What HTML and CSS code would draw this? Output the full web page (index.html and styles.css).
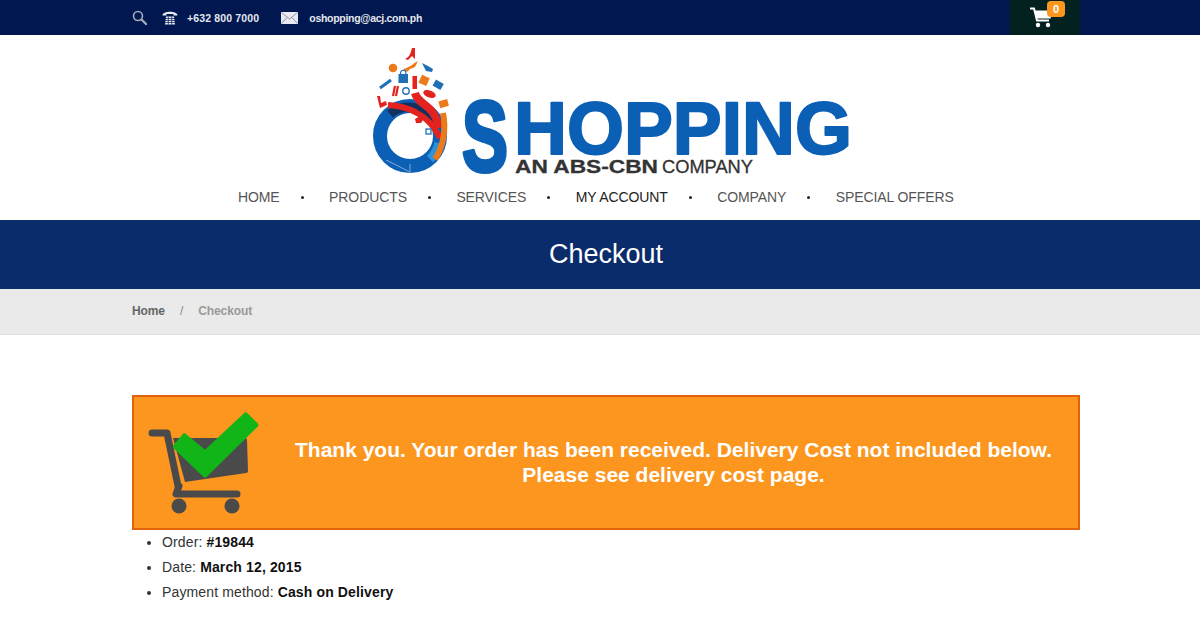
FILE: index.html
```html
<!DOCTYPE html>
<html>
<head>
    <title>Checkout - O Shopping</title>
    <link rel="stylesheet" href="styles.css">
</head>
<body>
    <div class="topbar">
        <div class="container topbar-inner">
            <svg class="icon-search" width="16" height="16" viewBox="0 0 16 16">
                <circle cx="6" cy="6" r="4.5" fill="none" stroke="#a3acb9" stroke-width="1.6"/>
                <path d="M9.5 9.5L14 14" stroke="#a3acb9" stroke-width="2.4" stroke-linecap="round"/>
            </svg>
            <svg class="icon-phone" width="16" height="16" viewBox="0 0 16 16">
                <path d="M0.500 5.500C0.500 0.500 15.500 0.500 15.500 5.500L11.500 5.500L11.500 4L4.500 4L4.500 5.500Z" fill="#e8eaf0"/>
                <path d="M4 6.500L12 6.500L13 14.500L3 14.500Z" fill="#e8eaf0"/>
                <path d="M3 8.500H13M3 10.500H13M3 12.500H13M6.300 6.500V14.500M9.700 6.500V14.500" stroke="#00174f" stroke-width="0.7"/>
            </svg>
            <span class="topbar-text phone-text">+632 800 7000</span>
            <svg class="icon-mail" width="17" height="12" viewBox="0 0 17 12">
                <rect width="17" height="12" fill="#e8eaf0"/>
                <path d="M0.500 0.500L8.500 7L16.500 0.500M0.500 11.500L6 5.500M16.500 11.500L11 5.500" fill="none" stroke="#7d8aa5" stroke-width="0.9"/>
            </svg>
            <span class="topbar-text mail-text">oshopping@acj.com.ph</span>
            <div class="cart-box">
                <svg width="23" height="21" viewBox="0 0 23 21">
                    <path d="M0 1.500H4L7 13.500H19" fill="none" stroke="#fff" stroke-width="2"/>
                    <path d="M5 3.500H23L20.500 11.500H7Z" fill="#fff"/>
                    <circle cx="8" cy="18" r="2.200" fill="#fff"/>
                    <circle cx="18" cy="18" r="2.200" fill="#fff"/>
                </svg>
                <span class="cart-badge">0</span>
            </div>
        </div>
    </div>

    <div class="header">
        <svg class="logo" width="500" height="158" viewBox="0 0 500 158">
            <!-- ring -->
            <circle cx="50" cy="100" r="30" fill="none" stroke="#0b60b5" stroke-width="14"/>
            <path d="M30 78A30 30 0 0 1 76 88" fill="none" stroke="#12315f" stroke-width="9"/>
            <path d="M79 107A30 30 0 0 1 70 123" fill="none" stroke="#2a93dc" stroke-width="9"/>
            <path d="M28 69C44 70 68 76 80 102" fill="none" stroke="#e2231f" stroke-width="6"/>
            <path d="M55 57C58 70 76 68 78 92" fill="none" stroke="#e2231f" stroke-width="8"/>
            <path d="M83 77C86 92 84 110 75 123" fill="none" stroke="#ec7a1a" stroke-width="6"/>
            <path d="M26 124L50 136M50 128V137" stroke="#9dbbe0" stroke-width="0.8" fill="none"/>
            <!-- things coming out of the ring -->
            <path d="M45 23C50 21 51 16 52 12L55 12L55 23L52 20L48 24Z" fill="#e2231f"/>
            <circle cx="33" cy="32" r="4.300" fill="#ec7a1a"/>
            <path d="M43 33C50 32 53 27 58 25L55 31L50 33L47 36Z" fill="#ec7a1a"/>
            <path d="M62 27L68 30L73 33L72 36L66 35Z" fill="#1f6fb7"/>
            <rect x="38.500" y="38" width="9.500" height="9" fill="#1f6fb7"/>
            <path d="M40.500 38C40.500 33 46 33 46 38" fill="none" stroke="#1f6fb7" stroke-width="1.200"/>
            <path d="M20 52L31 44" stroke="#1f6fb7" stroke-width="3"/>
            <rect x="60" y="40" width="8.500" height="8.500" fill="#ec7a1a" transform="rotate(25 64 44)"/>
            <rect x="74" y="45" width="9" height="7" fill="#1f6fb7" transform="rotate(30 78 48)"/>
            <path d="M35 50L33 60M38 50L36 60" stroke="#e2231f" stroke-width="2.200"/>
            <circle cx="46" cy="55" r="3.200" fill="none" stroke="#1f6fb7" stroke-width="1.400"/>
            <rect x="52.500" y="40" width="4.500" height="13" fill="#e2231f"/>
            <ellipse cx="69.500" cy="58" rx="6.500" ry="3.500" fill="#e2231f" transform="rotate(20 69.500 58)"/>
            <path d="M17 60L20 60L21 67L26 65L27 69L20 72Z" fill="#e2231f"/>
            <rect x="79" y="64" width="9" height="7" fill="#ec7a1a" transform="rotate(-15 84 67)"/>
            <path d="M55 83L60 80L63 84L61 87L56 87Z" fill="#e2231f"/>
            <rect x="66" y="93" width="5" height="5" fill="none" stroke="#1f6fb7" stroke-width="1.300"/>
            <!-- wordmark -->
            <text class="logo-s" x="102" y="135" textLength="46" lengthAdjust="spacingAndGlyphs">S</text>
            <text class="logo-word" x="154" y="118" textLength="338" lengthAdjust="spacingAndGlyphs">HOPPING</text>
            <text class="logo-sub logo-sub-wide" x="155" y="137" textLength="143" lengthAdjust="spacingAndGlyphs">AN ABS-CBN</text>
            <text class="logo-sub" x="302" y="137" textLength="91" lengthAdjust="spacingAndGlyphs">COMPANY</text>
        </svg>
        <ul class="nav">
            <li><a>HOME</a></li>
            <li><a>PRODUCTS</a></li>
            <li><a>SERVICES</a></li>
            <li><a class="current">MY ACCOUNT</a></li>
            <li><a>COMPANY</a></li>
            <li class="last"><a>SPECIAL OFFERS</a></li>
        </ul>
    </div>

    <div class="page-title">
        <h1 class="container">Checkout</h1>
    </div>

    <div class="breadcrumb">
        <div class="container">
            <a>Home</a><span class="sep">/</span><span class="crumb-now">Checkout</span>
        </div>
    </div>

    <div class="container content">
        <div class="order-notice">
            <svg class="notice-icon" width="112" height="111" viewBox="0 0 112 111">
                <path d="M4 26H19L30 79" fill="none" stroke="#4a4a4a" stroke-width="7" stroke-linecap="round" stroke-linejoin="round"/>
                <path d="M25 31H97A2 2 0 0 1 99 33L100 64Q100 66 98 66L37 75Z" fill="#4a4a4a"/>
                <path d="M31 79L28 87H89" fill="none" stroke="#4a4a4a" stroke-width="7" stroke-linecap="round" stroke-linejoin="round"/>
                <circle cx="31" cy="99" r="7.500" fill="#4a4a4a"/>
                <circle cx="84" cy="99" r="7.500" fill="#4a4a4a"/>
                <path d="M97.700 8L107.800 18L57 68L27.500 39.700L36.300 29L57 46Z" fill="#12b518" stroke="#12b518" stroke-width="5" stroke-linejoin="round"/>
            </svg>
            <p class="notice-text">Thank you. Your order has been received. Delivery Cost not included below.<br>Please see delivery cost page.</p>
        </div>
        <ul class="order-list">
            <li>Order: <b>#19844</b></li>
            <li>Date: <b>March 12, 2015</b></li>
            <li>Payment method: <b>Cash on Delivery</b></li>
        </ul>
    </div>
</body>
</html>
```

FILE: styles.css
```css
body {
    margin: 0;
    padding: 0;
    font-family: "Liberation Sans", Arial, sans-serif;
    background-color: #fff;
    overflow: hidden;
}

.container {
    width: 948px;
    margin-left: 132px;
    box-sizing: border-box;
}

.topbar {
    height: 35px;
    background-color: #00174f;
}

.topbar-inner {
    display: flex;
    align-items: center;
    height: 35px;
}

.icon-phone {
    margin-left: 14px;
}

.topbar-text {
    font-size: 10.500px;
    font-weight: bold;
    color: #e4e7ee;
}

.phone-text {
    margin-left: 9px;
    letter-spacing: 0.15px;
}

.mail-text {
    letter-spacing: -0.3px;
}

.icon-mail {
    margin-left: 22px;
    margin-right: 11px;
}

.cart-box {
    position: relative;
    display: flex;
    align-items: center;
    justify-content: center;
    width: 70px;
    height: 35px;
    margin-left: auto;
    background-color: #03211f;
}

.cart-box svg {
    margin-right: 8px;
}

.cart-badge {
    position: absolute;
    top: 1px;
    left: 37px;
    width: 18px;
    height: 16px;
    line-height: 16px;
    border-radius: 4px;
    background-color: #fc961f;
    color: #fff;
    font-size: 11px;
    font-weight: bold;
    text-align: center;
}

.header {
    height: 185px;
    display: flex;
    flex-direction: column;
    box-sizing: border-box;
    padding-top: 1px;
}

.logo {
    display: block;
    margin-left: 360px;
    flex: none;
}

.logo-s {
    font-size: 100px;
    font-weight: bold;
    fill: #0b60b5;
    stroke: #0b60b5;
    stroke-width: 4;
    stroke-linejoin: round;
}

.logo-word {
    font-size: 74px;
    font-weight: bold;
    fill: #0b60b5;
    stroke: #0b60b5;
    stroke-width: 2;
    stroke-linejoin: round;
}

.logo-sub {
    font-size: 18px;
    fill: #333;
    stroke: #333;
    stroke-width: 0.3;
}

.logo-sub-wide {
    font-weight: bold;
}

.nav {
    display: flex;
    list-style: none;
    margin: -5px 0 0 238px;
    padding: 0;
    font-size: 14px;
    letter-spacing: -0.1px;
    color: #555;
}

.nav li {
    display: flex;
    align-items: center;
}

.nav li::after {
    content: "";
    width: 3px;
    height: 3px;
    border-radius: 50%;
    background-color: #222;
    margin: 0 25.500px 0 21px;
}

.nav li.last::after {
    display: none;
}

.nav .current {
    color: #222;
}

.page-title {
    height: 69px;
    background-color: #0a2c6b;
}

.page-title h1 {
    margin-top: 0;
    margin-bottom: 0;
    font-size: 27px;
    font-weight: normal;
    line-height: 68px;
    text-align: center;
    color: #fff;
}

.breadcrumb {
    height: 46px;
    line-height: 45px;
    box-sizing: border-box;
    background-color: #eaeaea;
    border-bottom: 1px solid #ddd;
    font-size: 12px;
    font-weight: bold;
    letter-spacing: -0.1px;
    color: #666;
}

.breadcrumb .sep {
    margin: 0 15px;
    font-weight: normal;
    color: #888;
}

.crumb-now {
    color: #999;
}

.content {
    padding-top: 60px;
}

.order-notice {
    display: flex;
    align-items: center;
    height: 135px;
    box-sizing: border-box;
    background-color: #fc961f;
    border: 2px solid #e2620c;
    padding-left: 14px;
}

.notice-icon {
    flex: none;
}

.notice-text {
    flex: 1;
    margin: 0 0 2px;
    padding-left: 9px;
    font-size: 21px;
    font-weight: bold;
    line-height: 25px;
    text-align: center;
    color: #fff;
}

.order-list {
    margin: 0;
    padding: 0 0 0 30px;
    font-size: 14px;
    line-height: 25px;
    letter-spacing: 0.13px;
    color: #333;
}

.order-list b {
    color: #111;
}
```
